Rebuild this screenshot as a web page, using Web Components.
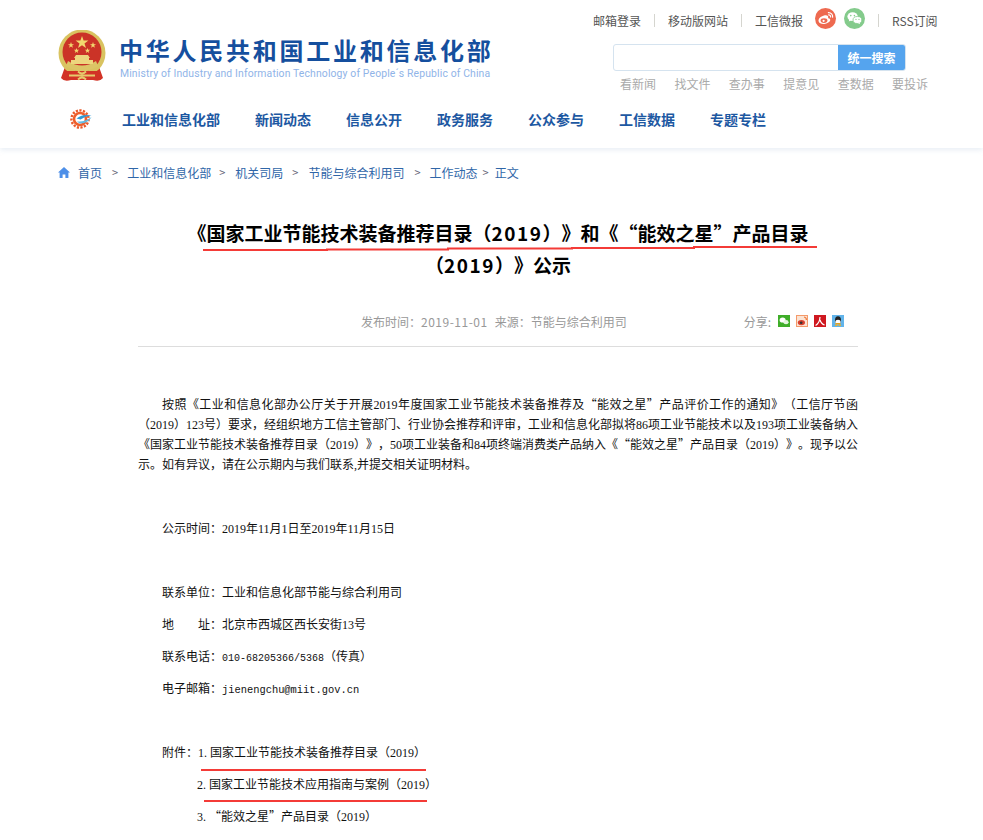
<!DOCTYPE html>
<html lang="zh">
<head>
<meta charset="utf-8">
<title>国家工业节能技术装备推荐目录（2019）</title>
<style>
  html, body { margin: 0; background: #fff; }
  body { font-family: "Noto Sans CJK SC", sans-serif; overflow: hidden; height: 840px; }
</style>
</head>
<body>
<miit-header></miit-header>
<miit-crumbs>
  <a>首页</a><a>工业和信息化部</a><a>机关司局</a><a>节能与综合利用司</a><a>工作动态</a><a>正文</a>
</miit-crumbs>
<miit-article></miit-article>

<script>
  // Shared font stack for everything in the shadow roots
  const SANS = '"Noto Sans CJK SC", "Noto Sans", sans-serif';

  // Noto's curly quotes are narrow by default, the reference has full-width ones
  const fw = (s) => s.replace(/[“”]/g, (q) => `<span class="q">${q}</span>`);

  const EMBLEM = `
    <svg width="48" height="52" viewBox="0 0 48 52" aria-hidden="true">
      <path d="M8 34 L3 48 Q6 52 13 50 L35 50 Q42 52 45 48 L40 34 Z" fill="#d23326"/>
      <circle cx="24" cy="23" r="23.5" fill="#d9c360"/>
      <circle cx="24" cy="22" r="19.5" fill="#cb3327"/>
      <path d="M8 36 Q24 47 40 36 L38 31 Q24 40 10 31 Z" fill="#dcc566"/>
      <path d="M24 6 l1.6 4.6 4.8 0 -3.9 2.9 1.5 4.6 -4-2.9 -4 2.9 1.5-4.6 -3.9-2.9 4.8 0 Z" fill="#f2d86e"/>
      <path d="M13 12 l.8 2.2 2.3 0 -1.9 1.4 .7 2.2 -1.9-1.3 -1.9 1.3 .7-2.2 -1.9-1.4 2.3 0 Z" fill="#f2d86e"/>
      <path d="M35 12 l.8 2.2 2.3 0 -1.9 1.4 .7 2.2 -1.9-1.3 -1.9 1.3 .7-2.2 -1.9-1.4 2.3 0 Z" fill="#f2d86e"/>
      <path d="M18.5 18 l.7 1.8 2 0 -1.6 1.2 .6 1.9 -1.7-1.1 -1.7 1.1 .6-1.9 -1.6-1.2 2 0 Z" fill="#f2d86e"/>
      <path d="M29.5 18 l.7 1.8 2 0 -1.6 1.2 .6 1.9 -1.7-1.1 -1.7 1.1 .6-1.9 -1.6-1.2 2 0 Z" fill="#f2d86e"/>
      <path d="M18 25 h12 l2 3 h-1 v2 h4 v4 h-22 v-4 h4 v-2 h-1 Z" fill="#edd67e"/>
      <rect x="7" y="41" width="34" height="9" rx="2" fill="#d23326"/>
      <path d="M11 45.5 h26 M20 41.5 q4 4 8 0 M20 49.5 q4-4 8 0" stroke="#e5ca6c" stroke-width="1.8" fill="none"/>
    </svg>`;

  const NAV_LOGO = `
    <svg width="22" height="20" viewBox="0 0 22 20" aria-hidden="true">
      <circle cx="10" cy="10" r="8.6" fill="none" stroke="#ea5a2a" stroke-width="2.4" stroke-dasharray="2.2 1.4"/>
      <circle cx="10" cy="10" r="6" fill="none" stroke="#ee5f2c" stroke-width="2.6"/>
      <path d="M6.5 9.4 Q13 4.6 21.6 6.6 Q15 7.2 10.6 10.4 Z" fill="#2f9ad6"/>
      <path d="M7 12.4 Q14 13.4 21.6 8 Q18 14.6 9.6 14.4 Z" fill="#63bce6"/>
    </svg>`;

  const WEIBO = `
    <svg width="21" height="21" viewBox="0 0 21 21" aria-hidden="true">
      <circle cx="10.5" cy="10.5" r="10.5" fill="#ee6a50"/>
      <path d="M9 7.6 C5.6 8.4 3.2 11 3.6 13.2 C4 15.4 7.2 16.4 10.2 15.8 C13.4 15.2 15.6 13.4 15.2 11.6 C15 10.6 13.8 10.2 13 10.2 C13.6 8.6 13 7.6 11.6 7.4 C10.8 7.3 9.8 7.4 9 7.6 Z" fill="#fff"/>
      <ellipse cx="9" cy="12.6" rx="3.4" ry="2.3" fill="#ee6a50"/>
      <circle cx="8.6" cy="12.8" r="1.1" fill="#fff"/>
      <path d="M13.4 4.6 a4 4 0 0 1 4.2 4.6 M13.6 6.8 a2 2 0 0 1 2 2.2" stroke="#fff" stroke-width="1.2" fill="none" stroke-linecap="round"/>
    </svg>`;

  const WECHAT = `
    <svg width="21" height="21" viewBox="0 0 21 21" aria-hidden="true">
      <circle cx="10.5" cy="10.5" r="10.5" fill="#84cb8c"/>
      <ellipse cx="8.6" cy="8.6" rx="5.2" ry="4.3" fill="#fff"/>
      <path d="M5.4 11 L4.8 13.6 L7.6 12 Z" fill="#fff"/>
      <ellipse cx="13.4" cy="12" rx="4.4" ry="3.5" fill="#fff" stroke="#84cb8c" stroke-width=".8"/>
      <path d="M15.4 14.4 L16.6 16 L13.8 15 Z" fill="#fff"/>
      <circle cx="6.8" cy="7.6" r=".8" fill="#84cb8c"/><circle cx="10.4" cy="7.6" r=".8" fill="#84cb8c"/>
      <circle cx="12" cy="11.4" r=".6" fill="#84cb8c"/><circle cx="15" cy="11.4" r=".6" fill="#84cb8c"/>
    </svg>`;

  class MiitHeader extends HTMLElement {
    constructor() {
      super();
      this.attachShadow({ mode: "open" });
      const navItems = ["工业和信息化部", "新闻动态", "信息公开", "政务服务", "公众参与", "工信数据", "专题专栏"];
      const quick = ["看新闻", "找文件", "查办事", "提意见", "查数据", "要投诉"];
      this.shadowRoot.innerHTML = `
        <style>
          :host {
            display: block;
            height: 148px;
            box-sizing: border-box;
            padding-left: 58px;
            background: #fff;
            box-shadow: 0 2px 5px rgba(190, 205, 225, .35);
            font-family: ${SANS};
            font-size: 12px;
          }
          .top { display: flex; height: 100px; }
          .brand { display: flex; gap: 14px; width: 535px; padding-top: 30px; align-items: flex-start; }
          .emblem { display: block; flex: none; }
          .names { padding-top: 5px; }
          .cn {
            color: #154f9e;
            font-size: 24px;
            font-weight: 700;
            line-height: 29px;
            letter-spacing: 2.75px;
            margin-left: -1px;
            white-space: nowrap;
          }
          .en {
            color: #90b4e8;
            font: 10.4px/12px "Roboto", sans-serif;
            letter-spacing: .135px;
            margin-top: 4px;
            white-space: nowrap;
          }
          .tools { flex: none; }
          .links { display: flex; align-items: center; height: 20px; padding-top: 10px; color: #555; white-space: nowrap; }
          .links i { width: 1px; height: 13px; background: #d5d5cf; margin: 1px 13px 0; }
          .links svg { display: block; margin-top: -4px; }
          .links .wb { margin-left: 12px; }
          .links .wx { margin-left: 8px; }
          .search {
            display: flex;
            box-sizing: border-box;
            width: 293px;
            height: 27px;
            margin: 14px 0 0 20px;
            border: 1px solid #d5e3ef;
            border-radius: 3px;
            overflow: hidden;
          }
          .search span { flex: 1; }
          .search b {
            flex: none;
            width: 67px;
            background: #55a4ee;
            color: #fff;
            font-size: 12px;
            line-height: 25px;
            text-align: center;
          }
          .quick { display: flex; gap: 18.4px; margin: 3px 0 0 27px; color: #aaa; line-height: 20px; }
          nav { display: flex; align-items: center; height: 38px; margin-left: 12px; color: #1d58a2; font-size: 14px; font-weight: 700; }
          nav svg { display: block; margin-right: 30px; }
          nav span { margin-right: 35px; white-space: nowrap; }
        </style>
        <div class="top">
          <div class="brand">
            <div class="emblem">${EMBLEM}</div>
            <div class="names">
              <div class="cn">中华人民共和国工业和信息化部</div>
              <div class="en">Ministry of Industry and Information Technology of People´s Republic of China</div>
            </div>
          </div>
          <div class="tools">
            <div class="links">
              <span>邮箱登录</span><i></i><span>移动版网站</span><i></i><span>工信微报</span>
              <span class="wb">${WEIBO}</span><span class="wx">${WECHAT}</span><i></i><span>RSS订阅</span>
            </div>
            <div class="search"><span></span><b>统一搜索</b></div>
            <div class="quick">${quick.map(q => `<span>${q}</span>`).join("")}</div>
          </div>
        </div>
        <nav>${NAV_LOGO}${navItems.map(n => `<span>${n}</span>`).join("")}</nav>
      `;
    }
  }

  class MiitCrumbs extends HTMLElement {
    constructor() {
      super();
      this.attachShadow({ mode: "open" });
      this.shadowRoot.innerHTML = `
        <style>
          :host {
            display: flex;
            align-items: center;
            height: 20px;
            padding: 14px 0 0 58px;
            color: #2f66a8;
            font-family: ${SANS};
            font-size: 12px;
          }
          svg { display: block; margin-right: 8px; }
        </style>
        <svg width="12" height="11" viewBox="0 0 12 11" aria-hidden="true">
          <path d="M6 0 L12 5.6 L10.4 5.6 L10.4 11 L7.4 11 L7.4 7.4 L4.6 7.4 L4.6 11 L1.6 11 L1.6 5.6 L0 5.6 Z" fill="#4d8fe8"/>
        </svg>
        <slot></slot>
      `;
      // separators go between the slotted links, spacing is uneven in the original
      const links = [...this.querySelectorAll("a")];
      const gaps = [[10, 9], [8, 10], [9, 10], [10, 9], [5, 6]];
      links.slice(0, -1).forEach((a, i) => {
        const sep = document.createElement("a");
        sep.textContent = ">";
        sep.style.cssText = `font-size:11px;margin:0 ${gaps[i][1]}px 0 ${gaps[i][0]}px;color:#667;`;
        a.after(sep);
      });
    }
  }

  class MiitShare extends HTMLElement {
    constructor() {
      super();
      this.attachShadow({ mode: "open" });
      this.shadowRoot.innerHTML = `
        <style>
          :host { display: flex; align-items: center; gap: 6px; }
          span { margin-right: 1px; }
          svg { display: block; }
        </style>
        <span>分享:</span>
        <svg width="12" height="12" viewBox="0 0 12 12" aria-hidden="true">
          <rect width="12" height="12" fill="#3fae29"/>
          <ellipse cx="4.6" cy="5" rx="3" ry="2.6" fill="#fff"/>
          <ellipse cx="8" cy="7.2" rx="2.6" ry="2.1" fill="#e4f5df"/>
        </svg>
        <svg width="12" height="12" viewBox="0 0 12 12" aria-hidden="true">
          <rect width="12" height="12" fill="#f59a6a"/>
          <rect x="1" y="1" width="10" height="10" fill="#fbe3d3"/>
          <ellipse cx="5.4" cy="7.6" rx="3.6" ry="2.6" fill="#d8412f"/>
          <circle cx="5.2" cy="7.8" r="1.3" fill="#333"/>
          <path d="M8 2 Q10.6 2.4 10.4 5" stroke="#ef7b3d" stroke-width="1.2" fill="none"/>
        </svg>
        <svg width="12" height="12" viewBox="0 0 12 12" aria-hidden="true">
          <rect width="12" height="12" fill="#cf1820"/>
          <path d="M6 2 C5.8 6 4 9 1.6 10.4 M6 5 C7 8 9 9.6 10.6 10" stroke="#fff" stroke-width="1.2" fill="none"/>
        </svg>
        <svg width="12" height="12" viewBox="0 0 12 12" aria-hidden="true">
          <rect width="12" height="12" fill="#62b4ea"/>
          <ellipse cx="6" cy="5" rx="3" ry="3.8" fill="#222"/>
          <ellipse cx="6" cy="7" rx="2.6" ry="2.3" fill="#fff"/>
          <path d="M3.2 8 h5.6 l-.6 1.4 h-4.4 Z" fill="#e8a21c"/>
          <path d="M3 10.4 h2.4 M6.6 10.4 h2.4" stroke="#eeb02a" stroke-width="1.2"/>
        </svg>
      `;
    }
  }

  class MiitArticle extends HTMLElement {
    constructor() {
      super();
      this.attachShadow({ mode: "open" });
      this.shadowRoot.innerHTML = `
        <style>
          :host {
            display: block;
            position: relative;
            width: 720px;
            margin-left: 138px;
            padding-top: 35px;
            font-family: ${SANS};
            color: #111;
            text-spacing-trim: space-all;
          }
          .q { font-family: ${SANS}; font-feature-settings: "fwid"; line-height: 0; }
          h1 {
            margin: 0;
            color: #000;
            font-size: 19px;
            font-weight: 700;
            line-height: 32px;
            text-align: center;
          }
          h1 .y { letter-spacing: 1.5px; }
          .meta {
            display: flex;
            height: 20px;
            align-items: center;
            margin-top: 30px;
            padding: 0 14px 15px 223px;
            border-bottom: 1px solid #ddd;
            color: #999;
            font-size: 12px;
          }
          .meta .date { letter-spacing: .5px; }
          .meta .src { margin-left: 7px; }
          miit-share { margin-left: auto; }
          .body {
            padding-top: 48px;
            font: 12px/20px "Liberation Serif", "Noto Sans CJK SC", serif;
          }
          p { margin: 0 0 12px; text-indent: 24px; }
          p.lines { text-indent: 0; }
          p.lines > span { display: block; text-align-last: justify; white-space: nowrap; }
          p.lines > span:first-child { padding-left: 24px; }
          p.lines > span:last-child { text-align-last: left; }
          .mono { font: 10.4px "Liberation Mono", monospace; }
          .tel { font: 10px "Liberation Mono", monospace; }
          .n { display: inline-block; width: 12px; text-indent: 0; }
          .files { padding-left: 35px; }
          .ink { position: absolute; left: 0; top: 0; overflow: visible; pointer-events: none; }
        </style>
        <h1>《国家工业节能技术装备推荐目录（<span class="y">2019</span>）》和《${fw("“能效之星”")}产品目录<br>（<span class="y">2019</span>）》公示</h1>
        <div class="meta">
          <span>发布时间：<span class="date">2019-11-01</span></span><span class="src">来源：节能与综合利用司</span>
          <miit-share></miit-share>
        </div>
        <div class="body">
          <p class="lines">
            <span>按照《工业和信息化部办公厅关于开展2019年度国家工业节能技术装备推荐及${fw("“能效之星”")}产品评价工作的通知》（工信厅节函</span>
            <span>（2019）123号）要求，经组织地方工信主管部门、行业协会推荐和评审，工业和信息化部拟将86项工业节能技术以及193项工业装备纳入</span>
            <span>《国家工业节能技术装备推荐目录（2019）》，50项工业装备和84项终端消费类产品纳入《${fw("“能效之星”")}产品目录（2019）》。现予以公</span>
            <span>示。如有异议，请在公示期内与我们联系,并提交相关证明材料。</span>
          </p>
          <p>&nbsp;</p>
          <p>公示时间：2019年11月1日至2019年11月15日</p>
          <p>&nbsp;</p>
          <p>联系单位：工业和信息化部节能与综合利用司</p>
          <p>地&nbsp;&nbsp;&nbsp;&nbsp;&nbsp;&nbsp;&nbsp;&nbsp;址：北京市西城区西长安街13号</p>
          <p>联系电话：<span class="tel">010-68205366/5368</span>（传真）</p>
          <p>电子邮箱：<span class="mono">jienengchu@miit.gov.cn</span></p>
          <p>&nbsp;</p>
          <p>附件：<span class="n">1.</span>国家工业节能技术装备推荐目录（2019）</p>
          <p class="files"><span class="n">2.</span>国家工业节能技术应用指南与案例（2019）</p>
          <p class="files"><span class="n">3.</span>${fw("“能效之星”")}产品目录（2019）</p>
        </div>
        <!-- red pen marks drawn over the text in the reference -->
        <svg class="ink" width="720" height="660" aria-hidden="true" fill="none" stroke="#f43b37" stroke-width="2">
          <path d="M65 68 H189 V67.5 H310 V66.5 H434 V66 H556 V65 H679"/>
          <path d="M63 588 H288"/>
          <path d="M66 619 H289"/>
        </svg>
      `;
    }
  }

  customElements.define("miit-share", MiitShare);
  customElements.define("miit-header", MiitHeader);
  customElements.define("miit-crumbs", MiitCrumbs);
  customElements.define("miit-article", MiitArticle);
</script>
</body>
</html>
